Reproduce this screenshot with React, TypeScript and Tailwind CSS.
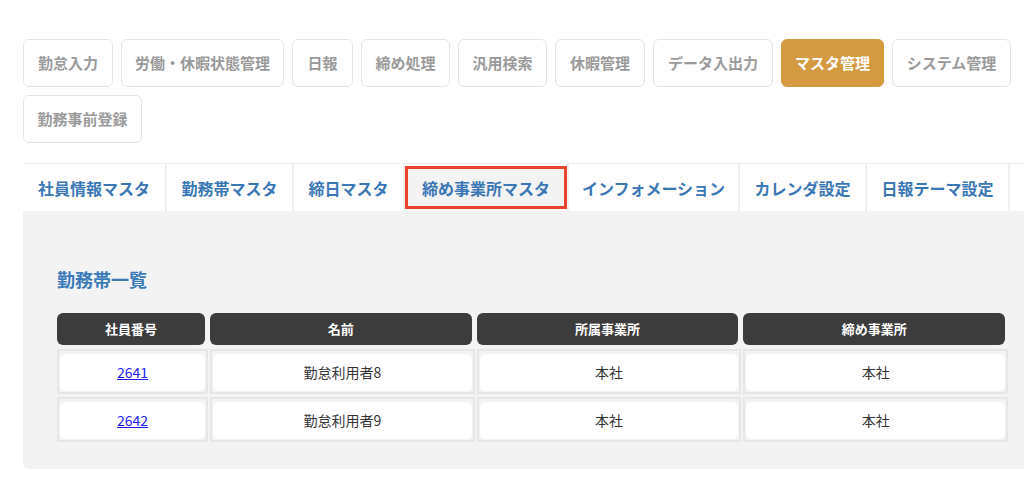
import React from "react";

const menus = [
  { label: "勤怠入力", w: "w-[90px]" },
  { label: "労働・休暇状態管理", w: "w-[163px]" },
  { label: "日報", w: "w-[61px]" },
  { label: "締め処理", w: "w-[89px]" },
  { label: "汎用検索", w: "w-[89px]" },
  { label: "休暇管理", w: "w-[90px]" },
  { label: "データ入出力", w: "w-[120px]" },
  { label: "マスタ管理", w: "w-[103px]" },
  { label: "システム管理", w: "w-[119px]" },
  { label: "勤務事前登録", w: "w-[119px]" },
];

const tabs = [
  { label: "社員情報マスタ", w: "w-[142px]" },
  { label: "勤務帯マスタ", w: "w-[125px]" },
  { label: "締日マスタ", w: "w-[109px]" },
  { label: "締め事業所マスタ", w: "w-[162px]" },
  { label: "インフォメーション", w: "w-[169px]" },
  { label: "カレンダ設定", w: "w-[125px]" },
  { label: "日報テーマ設定", w: "w-[141px]" },
  { label: "", w: "w-[109px]" },
];

const rows = [
  { id: "2641", name: "勤怠利用者8", office: "本社", closing: "本社" },
  { id: "2642", name: "勤怠利用者9", office: "本社", closing: "本社" },
];

const headers = ["社員番号", "名前", "所属事業所", "締め事業所"];

function Cell({ children }: { children: React.ReactNode }) {
  return (
    <div className="border-2 border-[#e6e6e6] px-px pt-[3px] pb-px">
      <div className="flex h-[37px] items-center justify-center rounded-md bg-white text-[14px] text-[#333]">
        {children}
      </div>
    </div>
  );
}

export default function App() {
  return (
    <div
      className="h-[484px] w-full overflow-hidden bg-white"
      style={{ fontFamily: '"Noto Sans CJK JP", "Noto Sans", sans-serif' }}
    >
      <div className="ml-[23px] w-[1019px] pt-[39px]">
        <div className="flex flex-wrap gap-2">
          {menus.map((m) => (
            <button
              key={m.label}
              className={
                m.label === "マスタ管理"
                  ? `h-12 ${m.w} whitespace-nowrap rounded-md border border-[#d49a41] bg-[#d49a41] text-[15px] font-bold text-white`
                  : `h-12 ${m.w} whitespace-nowrap rounded-md border border-[#e4e4e4] bg-white text-[15px] font-bold text-[#9a9a9a]`
              }
            >
              {m.label}
            </button>
          ))}
        </div>

        <div className="mt-5 flex gap-[2px] overflow-hidden whitespace-nowrap border-t border-[#eeeeee] bg-[#f0f0f0]">
          {tabs.map((t, i) =>
            t.label === "締め事業所マスタ" ? (
              <div key={i} className={`flex h-[47px] ${t.w} shrink-0 bg-white py-[2px]`}>
                <div className="flex h-full w-full items-center justify-center border-[3px] border-[#e8432b] bg-[#f3f3f3] text-[16px] font-bold text-[#3a77b5]">
                  {t.label}
                </div>
              </div>
            ) : (
              <div
                key={i}
                className={`flex h-[47px] ${t.w} shrink-0 items-center justify-center bg-white text-[16px] font-bold text-[#3a77b5]`}
              >
                {t.label}
              </div>
            )
          )}
        </div>

        <div className="h-[258px] rounded-b-md bg-[#f3f3f3] px-[34px] pt-[55px]">
          <h2 className="text-[18px] font-bold leading-[27px] text-[#3a7ab8]">勤務帯一覧</h2>
          <div className="mt-[20px] grid grid-cols-[151px_1fr_1fr_1fr] gap-x-[2px]">
            {headers.map((h) => (
              <div
                key={h}
                className="mr-[3px] flex h-8 items-center justify-center rounded-md bg-[#3c3c3c] text-[13px] font-bold text-white"
              >
                {h}
              </div>
            ))}
          </div>
          <div className="mt-[4px] flex flex-col gap-[3px]">
            {rows.map((r) => (
              <div key={r.id} className="grid grid-cols-[151px_1fr_1fr_1fr] gap-x-[2px]">
                <Cell>
                  <a href="#" className="text-[#2020ee] underline">
                    {r.id}
                  </a>
                </Cell>
                <Cell>{r.name}</Cell>
                <Cell>{r.office}</Cell>
                <Cell>{r.closing}</Cell>
              </div>
            ))}
          </div>
        </div>
      </div>
    </div>
  );
}
